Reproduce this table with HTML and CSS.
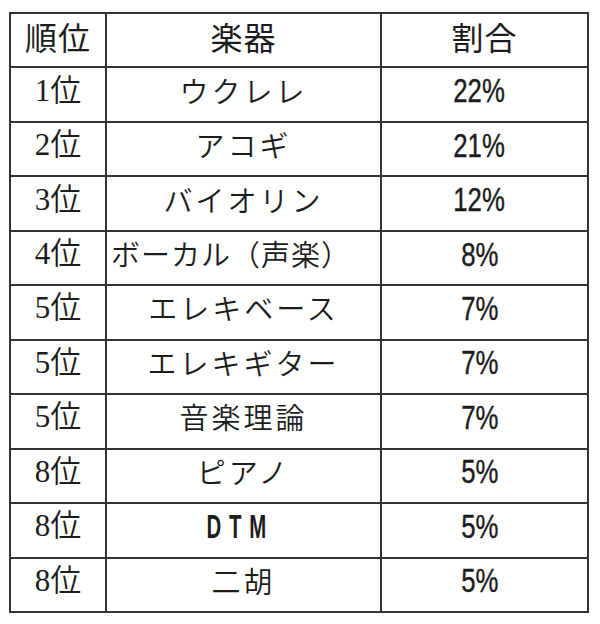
FILE: index.html
```html
<!DOCTYPE html>
<html lang="ja">
<head>
<meta charset="utf-8">
<title>楽器ランキング</title>
<link rel="stylesheet" href="styles.css">
</head>
<body>
<div class="rank-table" role="table">
  <div class="cell head" role="columnheader">順位</div>
  <div class="cell head" role="columnheader">楽器</div>
  <div class="cell head" role="columnheader">割合</div>

  <div class="cell rank">1位</div><div class="cell inst">ウクレレ</div><div class="cell pct"><span class="num">22%</span></div>
  <div class="cell rank">2位</div><div class="cell inst">アコギ</div><div class="cell pct"><span class="num">21%</span></div>
  <div class="cell rank">3位</div><div class="cell inst">バイオリン</div><div class="cell pct"><span class="num">12%</span></div>
  <div class="cell rank">4位</div><div class="cell inst inst-wide">ボーカル（声楽）</div><div class="cell pct"><span class="num">8%</span></div>
  <div class="cell rank">5位</div><div class="cell inst">エレキベース</div><div class="cell pct"><span class="num">7%</span></div>
  <div class="cell rank">5位</div><div class="cell inst">エレキギター</div><div class="cell pct"><span class="num">7%</span></div>
  <div class="cell rank">5位</div><div class="cell inst">音楽理論</div><div class="cell pct"><span class="num">7%</span></div>
  <div class="cell rank">8位</div><div class="cell inst">ピアノ</div><div class="cell pct"><span class="num">5%</span></div>
  <div class="cell rank">8位</div><div class="cell inst"><span class="latin">DTM</span></div><div class="cell pct"><span class="num">5%</span></div>
  <div class="cell rank">8位</div><div class="cell inst">二胡</div><div class="cell pct"><span class="num">5%</span></div>
</div>
</body>
</html>
```

FILE: styles.css
```css
html, body {
  margin: 0;
  padding: 0;
  background: #ffffff;
}

body {
  padding: 12px 0 0 9px;
  color: #1c1c1c;
  font-family: "Noto Sans CJK JP", sans-serif;
}

.rank-table {
  display: grid;
  grid-template-columns: 96px 275px 207px;
  grid-template-rows: repeat(11, 1fr);
  width: 580px;
  height: 601px;
  box-sizing: border-box;
  border-top: 2px solid #333333;
  border-left: 2px solid #333333;
}

.cell {
  display: flex;
  align-items: center;
  justify-content: center;
  border-right: 2px solid #333333;
  border-bottom: 2px solid #333333;
  line-height: 1;
  white-space: nowrap;
  padding-bottom: 9px;
  box-sizing: border-box;
  min-width: 0;
}

.head {
  font-size: 32px;
  font-weight: normal;
  letter-spacing: 1px;
  padding-bottom: 9px;
}

.rank {
  font-family: "Liberation Serif", "Noto Sans CJK JP", serif;
  font-size: 31px;
  font-weight: 350;
}

.inst {
  font-family: "Noto Sans CJK JP", sans-serif;
  font-size: 29px;
  font-weight: 350;
  letter-spacing: 3px;
}

.inst-wide {
  letter-spacing: 1px;
  justify-content: flex-start;
  padding-left: 4px;
}

.latin {
  display: inline-block;
  font-family: "Liberation Sans", sans-serif;
  font-weight: bold;
  font-size: 34px;
  letter-spacing: 13px;
  transform: scaleX(0.6);
  margin-right: 6px;
}

.pct {
  padding-right: 10px;
  padding-bottom: 8px;
}

.num {
  display: inline-block;
  font-family: "Liberation Sans", sans-serif;
  font-size: 33px;
  transform: scaleX(0.78);
  -webkit-text-stroke: 0.4px #1c1c1c;
}
```
